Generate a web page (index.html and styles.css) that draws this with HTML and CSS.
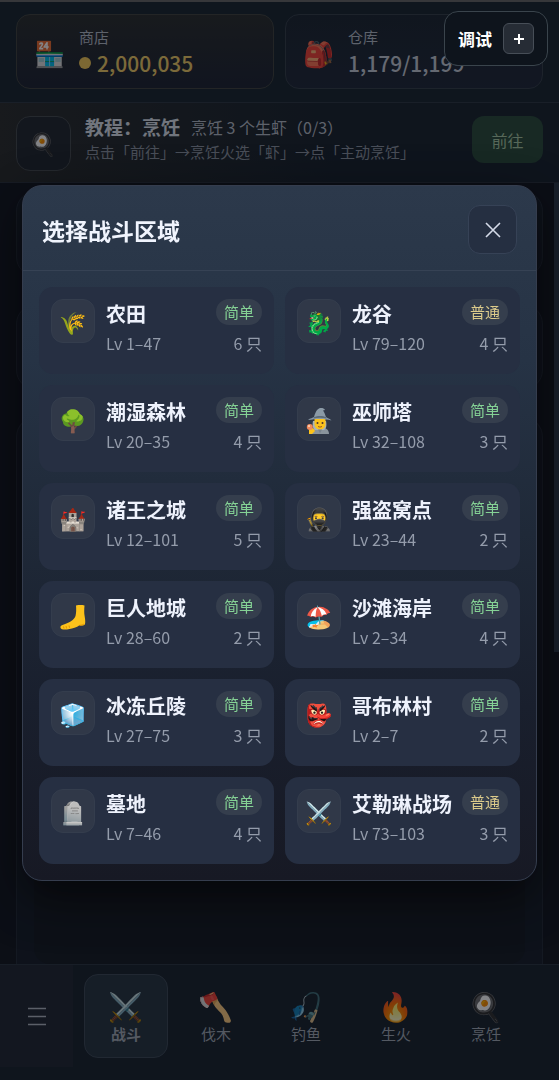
FILE: index.html
```html
<!DOCTYPE html>
<html lang="zh-CN">
<head>
  <meta charset="UTF-8">
  <meta name="viewport" content="width=device-width, initial-scale=1.0">
  <title>选择战斗区域</title>
  <link rel="stylesheet" href="styles.css">
</head>
<body>
  <div class="app">
    <header class="topbar">
      <button class="stat shop">
        <span class="stat-icon">🏪</span>
        <span class="stat-text">
          <span class="stat-label">商店</span>
          <span class="stat-value gold"><i class="coin"></i>2,000,035</span>
        </span>
      </button>
      <button class="stat">
        <span class="stat-icon">🎒</span>
        <span class="stat-text">
          <span class="stat-label">仓库</span>
          <span class="stat-value">1,179/1,199</span>
        </span>
      </button>
    </header>

    <section class="tutorial">
      <div class="tutorial-icon">🍳</div>
      <div class="tutorial-text">
        <div class="tutorial-title"><b>教程：烹饪</b><span>烹饪 3 个生虾（0/3）</span></div>
        <div class="tutorial-hint">点击「前往」→烹饪火选「虾」→点「主动烹饪」</div>
      </div>
      <button class="go">前往</button>
    </section>

    <main class="content">
      <div class="panel"></div>
      <div class="panel"></div>
      <div class="panel panel-main"><div class="panel-inner"></div></div>
      <div class="scroll-thumb"></div>
    </main>

    <nav class="bottom-nav">
      <button class="menu" aria-label="菜单">
        <svg width="20" height="20" viewBox="0 0 20 20"><path d="M1 2.5h18M1 10.5h18M1 18.5h18"/></svg>
      </button>
      <div class="tabs">
        <button class="tab active"><span class="tab-icon">⚔️</span>战斗</button>
        <button class="tab"><span class="tab-icon">🪓</span>伐木</button>
        <button class="tab"><span class="tab-icon">🎣</span>钓鱼</button>
        <button class="tab"><span class="tab-icon">🔥</span>生火</button>
        <button class="tab"><span class="tab-icon">🍳</span>烹饪</button>
      </div>
    </nav>
  </div>

  <div class="backdrop">
    <div class="dialog" role="dialog" aria-labelledby="dialog-title">
      <div class="dialog-head">
        <h2 id="dialog-title">选择战斗区域</h2>
        <button class="close" aria-label="关闭">
          <svg width="16" height="16" viewBox="0 0 16 16"><path d="M1 1l14 14M15 1L1 15"/></svg>
        </button>
      </div>
      <div class="zones">
        <button class="zone">
          <span class="zone-icon">🌾</span>
          <span class="zone-info">
            <span class="row"><span class="name">农田</span><span class="badge easy">简单</span></span>
            <span class="row meta"><span>Lv 1–47</span><span>6 只</span></span>
          </span>
        </button>
        <button class="zone">
          <span class="zone-icon">🐉</span>
          <span class="zone-info">
            <span class="row"><span class="name">龙谷</span><span class="badge normal">普通</span></span>
            <span class="row meta"><span>Lv 79–120</span><span>4 只</span></span>
          </span>
        </button>
        <button class="zone">
          <span class="zone-icon">🌳</span>
          <span class="zone-info">
            <span class="row"><span class="name">潮湿森林</span><span class="badge easy">简单</span></span>
            <span class="row meta"><span>Lv 20–35</span><span>4 只</span></span>
          </span>
        </button>
        <button class="zone">
          <span class="zone-icon">
            <!-- wizard -->
            <svg class="drawn" width="26" height="26" viewBox="0 0 26 26">
              <path fill="#8a949c" d="M5 26c0-5 3.500-7 8.500-7s9.500 2 9.500 7z"/>
              <path fill="#a9b2b8" d="M7 13c-1 5 0 8 2 9h9c2-1 3-4 2-9z"/>
              <path fill="#fcc21b" d="M8.500 10h11v6c0 3.500-2.500 5.500-5.500 5.500s-5.500-2-5.500-5.500z"/>
              <path fill="#78838c" d="M12 21.500h4l-2 4z"/>
              <circle cx="11.500" cy="15" r="1" fill="#4e342e"/>
              <circle cx="16.500" cy="15" r="1" fill="#4e342e"/>
              <path stroke="#9c5a20" stroke-width="1" d="M12 18.500q2 1.300 4 0"/>
              <path fill="#8b9aa6" d="M2 12c2-2 5-2 6-3 1-3 2-7 5-8.500 2-.8 5-.5 6 1.500l-2 .5c1.500 2 2 4 3 6.500 1 1 4 1.500 5.500 3.500-4-1-7-1.500-11.500-1.500S6 11.500 2 12z"/>
              <path fill="#5d6b76" d="M8 9c3.500-1.500 9-1.500 12 0l.5 1.500c-4-1-9-1-13 0z"/>
              <path fill="#fcc21b" d="M3 21l4-1 2 3-3 3H3z"/>
              <circle cx="3.800" cy="19" r="3" fill="#f08a5d"/>
              <circle cx="3" cy="18" r="1" fill="#ffd9c2"/>
            </svg>
          </span>
          <span class="zone-info">
            <span class="row"><span class="name">巫师塔</span><span class="badge easy">简单</span></span>
            <span class="row meta"><span>Lv 32–108</span><span>3 只</span></span>
          </span>
        </button>
        <button class="zone">
          <span class="zone-icon">🏰</span>
          <span class="zone-info">
            <span class="row"><span class="name">诸王之城</span><span class="badge easy">简单</span></span>
            <span class="row meta"><span>Lv 12–101</span><span>5 只</span></span>
          </span>
        </button>
        <button class="zone">
          <span class="zone-icon">🥷</span>
          <span class="zone-info">
            <span class="row"><span class="name">强盗窝点</span><span class="badge easy">简单</span></span>
            <span class="row meta"><span>Lv 23–44</span><span>2 只</span></span>
          </span>
        </button>
        <button class="zone">
          <span class="zone-icon">
            <!-- foot -->
            <svg class="drawn" width="26" height="26" viewBox="0 0 26 26">
              <path fill="#fcc21b" d="M16 1.500c3-.6 6-.6 8.500 0-.3 4-.5 7 .2 11 .5 3 .8 5.500.3 7.500-.4 1.500-3 1.800-5.500 1.300-1.500 1.200-3 2-5 2.500-4 1.200-8 2-11 1.700C1 25.300 0 24 .5 22.500c.5-1 2-1.500 4-2.200C9.500 18.500 14 16 15.500 12c.8-3 .8-7 .5-10.500z"/>
              <path stroke="#e59600" stroke-width="1" d="M3.500 22.500l.5 2M6 22l.6 2.500M9 21.500l.6 2.300M19.500 21.300c2 0 3.500-.5 4.500-1.300"/>
            </svg>
          </span>
          <span class="zone-info">
            <span class="row"><span class="name">巨人地城</span><span class="badge easy">简单</span></span>
            <span class="row meta"><span>Lv 28–60</span><span>2 只</span></span>
          </span>
        </button>
        <button class="zone">
          <span class="zone-icon">🏖️</span>
          <span class="zone-info">
            <span class="row"><span class="name">沙滩海岸</span><span class="badge easy">简单</span></span>
            <span class="row meta"><span>Lv 2–34</span><span>4 只</span></span>
          </span>
        </button>
        <button class="zone">
          <span class="zone-icon">🧊</span>
          <span class="zone-info">
            <span class="row"><span class="name">冰冻丘陵</span><span class="badge easy">简单</span></span>
            <span class="row meta"><span>Lv 27–75</span><span>3 只</span></span>
          </span>
        </button>
        <button class="zone">
          <span class="zone-icon">👺</span>
          <span class="zone-info">
            <span class="row"><span class="name">哥布林村</span><span class="badge easy">简单</span></span>
            <span class="row meta"><span>Lv 2–7</span><span>2 只</span></span>
          </span>
        </button>
        <button class="zone">
          <span class="zone-icon">🪦</span>
          <span class="zone-info">
            <span class="row"><span class="name">墓地</span><span class="badge easy">简单</span></span>
            <span class="row meta"><span>Lv 7–46</span><span>4 只</span></span>
          </span>
        </button>
        <button class="zone">
          <span class="zone-icon">⚔️</span>
          <span class="zone-info">
            <span class="row"><span class="name">艾勒琳战场</span><span class="badge normal">普通</span></span>
            <span class="row meta"><span>Lv 73–103</span><span>3 只</span></span>
          </span>
        </button>
      </div>
    </div>
  </div>

  <div class="debug">
    <span>调试</span>
    <button class="debug-toggle" aria-label="展开">
      <svg width="12" height="12" viewBox="0 0 12 12"><path d="M6 1v10M1 6h10"/></svg>
    </button>
  </div>
</body>
</html>
```
FILE: styles.css
```css
* {
  box-sizing: border-box;
}

body {
  margin: 0;
  background: #12161f;
  color: #e6ebf5;
  font-family: "Noto Sans CJK SC", "Noto Color Emoji", sans-serif;
  font-size: 16px;
}

button {
  padding: 0;
  border: none;
  background: none;
  color: inherit;
  font: inherit;
  text-align: left;
}

svg {
  display: block;
  fill: none;
  stroke: currentColor;
  stroke-width: 2;
}

.app {
  display: flex;
  flex-direction: column;
  height: 100vh;
  border-top: 2px solid #666;
}

/* top bar */
.topbar {
  display: grid;
  grid-template-columns: 1fr 1fr;
  gap: 11px;
  padding: 12px 16px 13px;
  background: #18242f;
  border-bottom: 1px solid #2c3742;
}

.stat {
  display: flex;
  align-items: center;
  gap: 15px;
  height: 75px;
  padding: 0 17px;
  border: 1px solid #343e49;
  border-radius: 14px;
  background: linear-gradient(#1b2530, #1f2738);
}

.stat.shop {
  border-color: #40433f;
  background: linear-gradient(#2a2d2d, #1c2231);
}

.stat-icon {
  width: 30px;
  font-size: 25px;
  line-height: 30px;
}

.stat-text {
  display: flex;
  flex-direction: column;
}

.stat-label {
  font-size: 15px;
  line-height: 22px;
  color: #b5bcc8;
}

.stat-value {
  display: flex;
  align-items: center;
  gap: 6px;
  font-size: 21px;
  font-weight: 500;
  line-height: 30px;
  color: #c5cbd6;
}

.stat-value.gold {
  color: #f0cc66;
}

.coin {
  width: 12px;
  height: 12px;
  border-radius: 50%;
  background: #f2c858;
}

/* tutorial strip */
.tutorial {
  display: flex;
  align-items: flex-start;
  padding: 13px 16px 11px;
  background: linear-gradient(90deg, #2a2c2c, #18222d 60%);
  border-bottom: 1px solid #2a313c;
}

.tutorial-icon {
  width: 55px;
  height: 55px;
  border: 1px solid #454a4e;
  border-radius: 14px;
  background: #20262e;
  font-size: 22px;
  line-height: 50px;
  text-align: center;
}

.tutorial-text {
  flex: 1;
  padding-left: 14px;
}

.tutorial-title {
  display: flex;
  align-items: center;
  gap: 11px;
  line-height: 22px;
  color: #b5bcc8;
}

.tutorial-title b {
  font-size: 19px;
  color: #dde2ec;
}

.tutorial-hint {
  font-size: 15px;
  line-height: 28px;
  color: #8d95a2;
}

.go {
  width: 71px;
  height: 47px;
  border-radius: 12px;
  background: #2a4a3a;
  color: #a8c9a4;
  text-align: center;
}

/* page behind the dialog */
.content {
  position: relative;
  flex: 1;
  display: flex;
  flex-direction: column;
  gap: 27px;
  min-height: 0;
  padding: 8px 16px 0;
}

.panel {
  flex: none;
  height: 86px;
  border: 1px solid #232a36;
  border-radius: 20px;
  background: #161d28;
}

.panel-main {
  flex: 1;
  height: auto;
  padding: 16px 17px 0;
  border-bottom: none;
  border-radius: 20px 20px 0 0;
}

.panel-inner {
  height: 100%;
  border-radius: 16px;
  background: #151a22;
}

.scroll-thumb {
  position: absolute;
  top: 0;
  right: 0;
  width: 5px;
  height: 60%;
  background: #2c3948;
}

/* bottom navigation */
.bottom-nav {
  display: flex;
  align-items: flex-start;
  height: 116px;
  border-top: 1px solid #2a3540;
  background: #18222d;
  overflow: hidden;
}

.menu {
  flex: none;
  display: flex;
  align-items: center;
  justify-content: center;
  width: 73px;
  height: 102px;
  background: #212633;
  color: #b0b6c2;
}

.menu svg {
  stroke-width: 1.5;
}

.tabs {
  display: flex;
  gap: 6px;
  padding: 9px 0 0 11px;
}

.tab {
  display: flex;
  flex-direction: column;
  align-items: center;
  justify-content: center;
  width: 84px;
  height: 84px;
  border: 1px solid transparent;
  border-radius: 14px;
  font-size: 15px;
  line-height: 22px;
  color: #a2aab6;
}

.tab.active {
  border-color: #3c4956;
  background: #273441;
  font-weight: bold;
}

.tab-icon {
  font-size: 28px;
  line-height: 36px;
}

/* dialog */
.backdrop {
  position: fixed;
  inset: 0;
  display: flex;
  align-items: center;
  justify-content: center;
  padding: 0 22px 14px;
  background: rgba(5, 8, 14, 0.5);
}

.dialog {
  width: 100%;
  max-width: 640px;
  border: 1px solid #353d4e;
  border-radius: 20px;
  background: linear-gradient(#2c394b, #263345 25%, #1f2938 50%, #191f2d 75%, #171924);
  box-shadow: 0 16px 48px rgba(0, 0, 0, 0.6);
}

.dialog-head {
  display: flex;
  align-items: center;
  justify-content: space-between;
  padding: 19px;
  padding-bottom: 16px;
  border-bottom: 1px solid #364254;
}

.dialog-head h2 {
  margin: 0;
  font-size: 23px;
  line-height: 34px;
  color: #f0f4fd;
}

.close {
  display: flex;
  align-items: center;
  justify-content: center;
  width: 49px;
  height: 49px;
  border: 1px solid #364256;
  border-radius: 12px;
  background: #252f41;
  color: #d5dbe8;
}

.close svg {
  stroke-width: 1.6;
}

.zones {
  display: grid;
  grid-template-columns: 1fr 1fr;
  grid-auto-rows: minmax(87px, auto);
  gap: 11px;
  padding: 16px;
}

.zone {
  display: flex;
  align-items: flex-start;
  gap: 11px;
  padding: 12px;
  border-radius: 14px;
  background: #262f42;
}

.zone-icon {
  flex: none;
  width: 44px;
  height: 44px;
  border: 1px solid #343d4d;
  border-radius: 12px;
  background: #303848;
  font-size: 22px;
  line-height: 42px;
  text-align: center;
}

.drawn {
  margin: 10px auto 0;
  stroke: none;
}

.zone-info {
  flex: 1;
  min-width: 0;
}

.row {
  display: flex;
  align-items: flex-start;
  justify-content: space-between;
  line-height: 28px;
  white-space: nowrap;
}

.name {
  font-size: 20px;
  font-weight: bold;
  line-height: 30px;
  color: #eef2fc;
}

.meta {
  color: #949cab;
}

.badge {
  padding: 0 8px;
  border-radius: 13px;
  background: #353e4d;
  font-size: 15px;
  line-height: 26px;
}

.easy {
  color: #85d295;
}

.normal {
  color: #dccb8b;
}

/* debug switch, stays above everything */
.debug {
  position: fixed;
  top: 11px;
  right: 11px;
  display: flex;
  align-items: center;
  gap: 11px;
  padding: 11px 13px;
  border: 1px solid #3a444c;
  border-radius: 14px;
  background: #0e141c;
  font-size: 17px;
  font-weight: bold;
  line-height: 28px;
  color: #fff;
}

.debug-toggle {
  display: flex;
  align-items: center;
  justify-content: center;
  width: 31px;
  height: 31px;
  border: 1px solid #474e57;
  border-radius: 6px;
  background: #262c35;
}
```
